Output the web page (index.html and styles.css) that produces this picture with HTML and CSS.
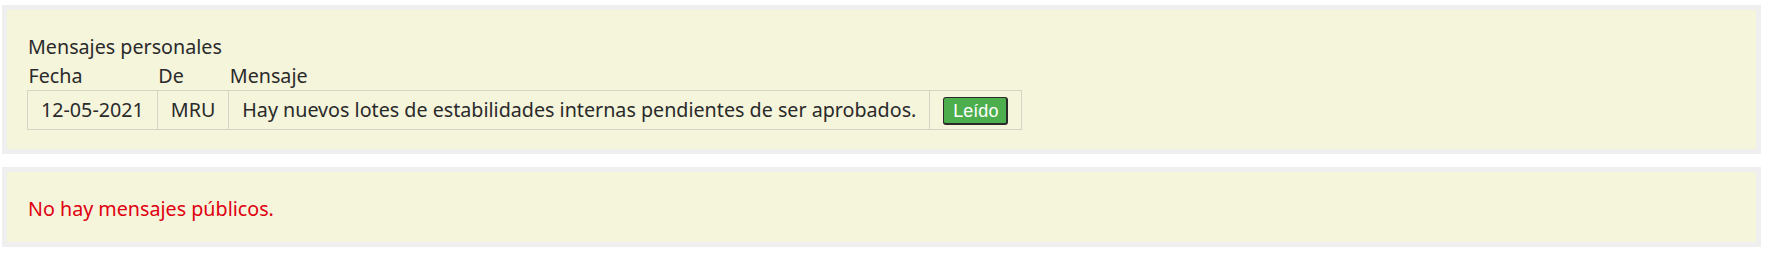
FILE: index.html
```html
<!DOCTYPE html>
<html lang="es">
<head>
<meta charset="utf-8">
<title>Mensajes</title>
<link rel="stylesheet" href="styles.css">
</head>
<body>
<div class="panel">
  <div class="title">Mensajes personales</div>
  <table class="msgs">
    <thead>
      <tr><th>Fecha</th><th>De</th><th>Mensaje</th><th></th></tr>
    </thead>
    <tbody>
      <tr>
        <td>12-05-2021</td>
        <td>MRU</td>
        <td>Hay nuevos lotes de estabilidades internas pendientes de ser aprobados.</td>
        <td><button class="btn-read" type="button">Leído</button></td>
      </tr>
    </tbody>
  </table>
</div>
<div class="panel">
  <div class="empty">No hay mensajes públicos.</div>
</div>
</body>
</html>
```
FILE: styles.css
```css
html, body {
  background: #ffffff;
}
body {
  margin: 5px 6px 0 2px;
  font-family: "Noto Sans", Lato, sans-serif;
  font-size: 19.7px;
  font-weight: 400;
  line-height: 29px;
  color: #2a2a2a;
}
.panel {
  background: #f5f5dc;
  border: 5px solid #efeff0;
  padding: 22px 20px 19px 20px;
}
.panel + .panel {
  margin-top: 13px;
}
.title {
  padding-left: 1px;
}
.msgs {
  border-collapse: collapse;
}
.msgs th {
  text-align: left;
  font-weight: 400;
  padding: 0 1px;
}
.msgs td {
  border: 1px solid #d4d4c4;
  padding: 3px 13px 4px 13px;
  white-space: nowrap;
}
.btn-read {
  font-family: "Liberation Sans", Arial, sans-serif;
  font-size: 18px;
  font-weight: normal;
  line-height: 22px;
  color: #ffffff;
  background: #4cae4c;
  border: 1px solid #2a2a2a;
  border-right-width: 2px;
  border-bottom-width: 2px;
  border-radius: 3px;
  padding: 2px 8px 1px 9px;
  vertical-align: middle;
}
.empty {
  color: #e0000f;
  padding-left: 1px;
}
```
